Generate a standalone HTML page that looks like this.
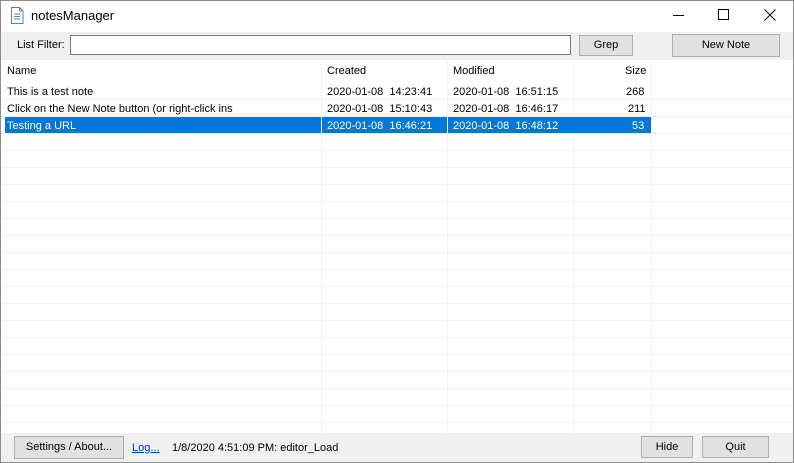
<!DOCTYPE html><html><head><style>
*{margin:0;padding:0;box-sizing:border-box}
body{width:794px;height:463px;overflow:hidden;background:#fff;font-family:"Liberation Sans",sans-serif;font-size:11px;color:#000;position:relative}
.a{position:absolute}
.btn{position:absolute;background:#e1e1e1;border:1px solid #adadad;text-align:center;font-size:11px}
.t{position:absolute;white-space:nowrap;font-size:11px}
.vl{position:absolute;top:60px;height:373px;width:1px;background:#f0f0f0}
</style></head><body>
<div class="a" style="left:0;top:0;width:794px;height:463px;border:1px solid #8c8c8c"></div>
<svg class="a" style="left:10px;top:7px" width="14" height="17" viewBox="0 0 14 17"><path d="M1.5 .5h8l3.5 3.5v12.5h-11.5z" fill="#fff" stroke="#5a7fa8"/><path d="M9.5 .5v3.5h3.5" fill="none" stroke="#5a7fa8"/><path d="M4 7h6M4 9.5h6M4 12h6" stroke="#5a7fa8"/></svg>
<div class="t" style="left:31px;top:8px;font-size:13px">notesManager</div>
<div class="a" style="left:673px;top:15px;width:11px;height:1px;background:#000"></div>
<div class="a" style="left:718px;top:9px;width:11px;height:11px;border:1px solid #000"></div>
<svg class="a" style="left:764px;top:9px" width="12" height="12"><path d="M0.5 .5l11 11M11.5 .5l-11 11" stroke="#000"/></svg>
<div class="a" style="left:1px;top:32px;width:792px;height:28px;background:#f0f0f0"></div>
<div class="t" style="left:17px;top:39px">List Filter:</div>
<div class="a" style="left:70px;top:35px;width:501px;height:20px;background:#fff;border:1px solid #7a7a7a"></div>
<div class="btn" style="left:579px;top:35px;width:54px;height:21px;line-height:19px">Grep</div>
<div class="btn" style="left:672px;top:34px;width:108px;height:23px;line-height:21px">New Note</div>
<div class="a" style="left:1px;top:83px;width:792px;height:350px;background:repeating-linear-gradient(to bottom,transparent 0,transparent 16px,#f0f0f0 16px,#f0f0f0 17px)"></div>
<div class="vl" style="left:321px"></div><div class="vl" style="left:447px"></div><div class="vl" style="left:573px"></div><div class="vl" style="left:651px"></div>
<div class="a" style="left:5px;top:117px;width:646px;height:16px;background:#0078d7"></div>
<div class="a" style="left:321px;top:117px;width:1px;height:16px;background:#fff"></div>
<div class="a" style="left:447px;top:117px;width:1px;height:16px;background:#fff"></div>
<div class="t" style="left:7px;top:65px">Name</div><div class="t" style="left:327px;top:65px">Created</div><div class="t" style="left:453px;top:65px">Modified</div><div class="t" style="left:625px;top:65px">Size</div>
<div class="t" style="left:7px;top:86px">This is a test note</div><div class="t" style="left:327px;top:86px">2020-01-08&nbsp; 14:23:41</div><div class="t" style="left:453px;top:86px">2020-01-08&nbsp; 16:51:15</div><div class="t" style="left:626px;top:86px">268</div>
<div class="t" style="left:7px;top:103px">Click on the New Note button (or right-click ins</div><div class="t" style="left:327px;top:103px">2020-01-08&nbsp; 15:10:43</div><div class="t" style="left:453px;top:103px">2020-01-08&nbsp; 16:46:17</div><div class="t" style="left:628px;top:103px">211</div>
<div class="t" style="left:7px;top:120px;color:#fff">Testing a URL</div><div class="t" style="left:327px;top:120px;color:#fff">2020-01-08&nbsp; 16:46:21</div><div class="t" style="left:453px;top:120px;color:#fff">2020-01-08&nbsp; 16:48:12</div><div class="t" style="left:632px;top:120px;color:#fff">53</div>
<div class="a" style="left:1px;top:433px;width:792px;height:29px;background:#f0f0f0"></div>
<div class="btn" style="left:14px;top:436px;width:110px;height:23px;line-height:21px">Settings / About...</div>
<div class="t" style="left:132px;top:442px;color:#0033cc;text-decoration:underline">Log...</div>
<div class="t" style="left:172px;top:442px">1/8/2020 4:51:09 PM: editor_Load</div>
<div class="btn" style="left:641px;top:436px;width:52px;height:22px;line-height:20px">Hide</div>
<div class="btn" style="left:702px;top:436px;width:67px;height:22px;line-height:20px">Quit</div>
</body></html>
